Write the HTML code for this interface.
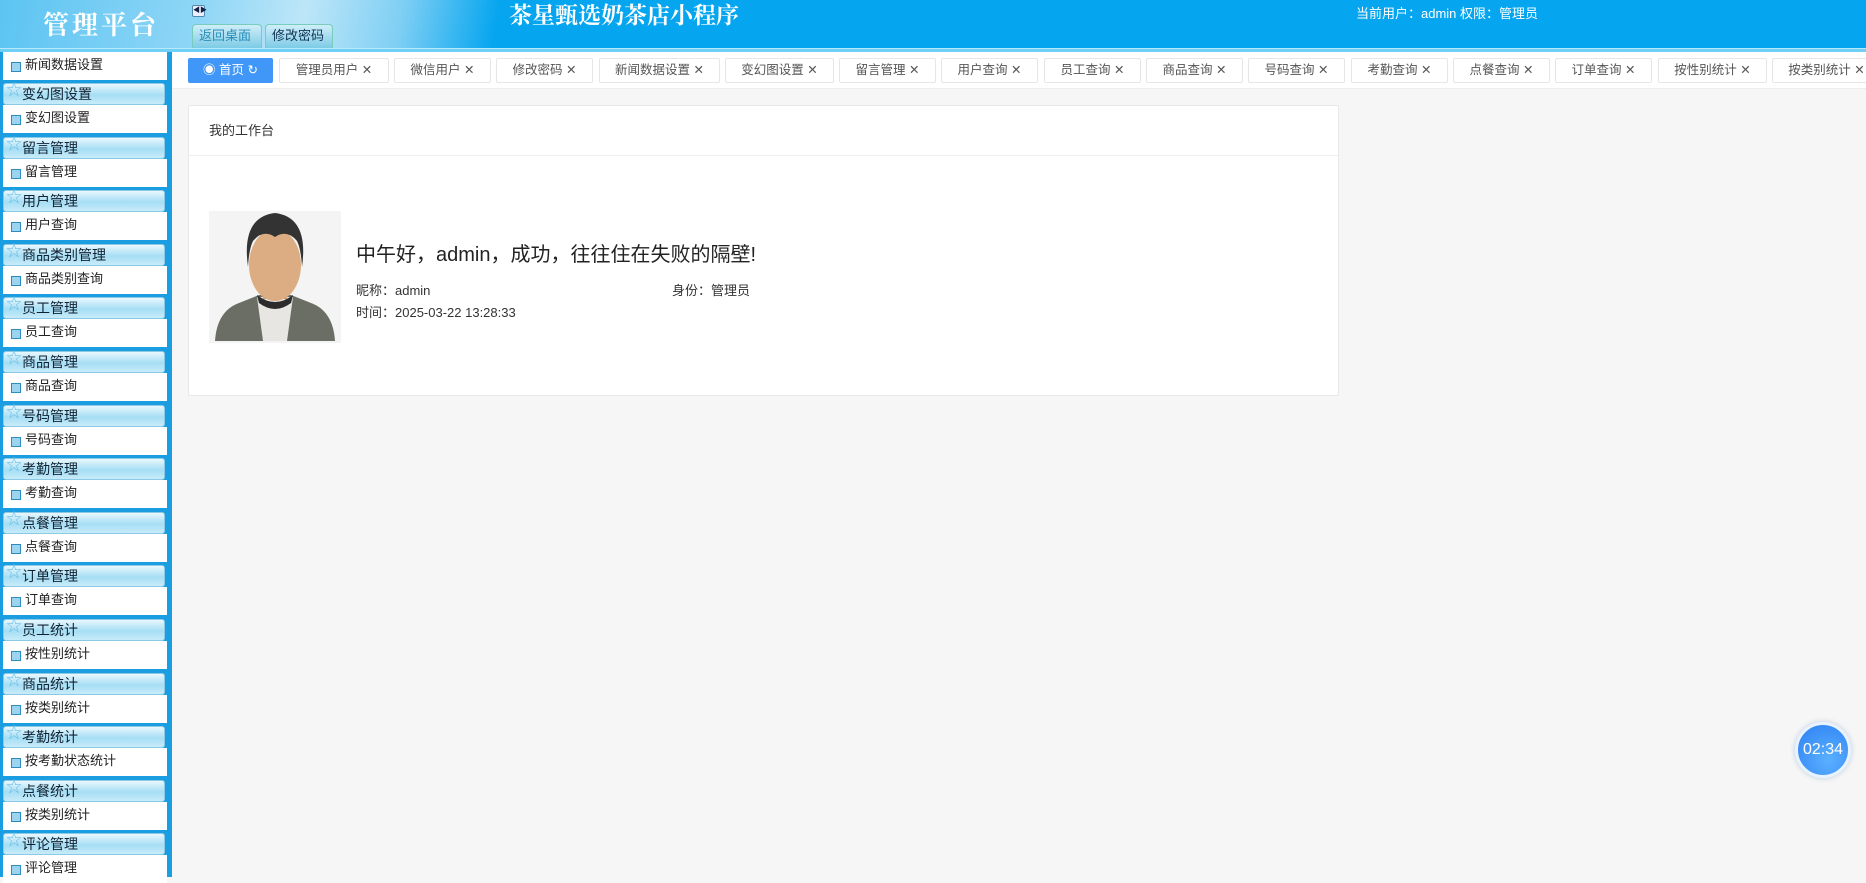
<!DOCTYPE html>
<html><head><meta charset="utf-8"><style>
*{margin:0;padding:0;box-sizing:border-box}
body{width:1866px;height:877px;overflow:hidden;background:#f6f6f6;font-family:"Liberation Sans","Noto Sans CJK SC",sans-serif;position:relative}
.hdr{position:absolute;left:0;top:0;width:1866px;height:48px;background:#05a5ef}
.hdrl{position:absolute;left:0;top:0;width:800px;height:48px;background:linear-gradient(100deg,#5cc4f2 0%,#8fd6f6 25%,#bde6f8 38%,#7fcff4 50%,#05a5ef 62%)}
.logo{position:absolute;left:43px;top:5px;font:bold 26px "Liberation Serif","Noto Serif CJK SC",serif;color:#fff;letter-spacing:3px}
.title{position:absolute;left:509px;top:-3px;font:bold 23px "Liberation Serif","Noto Serif CJK SC",serif;color:#fff}
.user{position:absolute;left:1356px;top:3px;font-size:13px;color:#fff}
.tgl{position:absolute;left:192px;top:5px;width:13px;height:12px;background:#eef;border:1px solid #58a;border-radius:2px;font-size:7px;line-height:10px;text-align:center;color:#124}
.htab{position:absolute;top:24px;height:24px;border:1px solid #7cb;border-bottom:none;border-radius:4px 4px 0 0;font-size:13px;line-height:22px;padding:0 6px;color:#135;background:linear-gradient(#cfeef8,#7dcbe6)}
.line{position:absolute;left:0;top:48px;width:1866px;height:4px;background:#6fd0f6;border-top:1px solid #b9e9fb}
.side{position:absolute;left:0;top:52px;width:172px;height:825px;background:#1b9de2}
.it{position:absolute;left:3px;width:164px;height:28px;background:#fff;font-size:13px;line-height:26px;color:#222;padding-left:22px}
.it:before{content:"";position:absolute;left:8px;top:10px;width:8px;height:8px;background:#9cd3ee;border:1px solid #2a8cc0}
.gh{position:absolute;left:3px;width:162px;height:22px;border:1px solid #8cc9e4;border-radius:3px;background:linear-gradient(#e8f7fd,#a6def4 55%,#c7ebf9);font-size:14px;line-height:20px;color:#123;padding-left:18px}
.gh:before{content:"☆";position:absolute;left:2px;top:-3px;color:#6bbfe6;font-size:16px}
.tabs{position:absolute;left:172px;top:52px;width:1694px;height:37px;background:#fff;border-bottom:1px solid #eee}
.t{position:absolute;top:6px;height:25px;border:1px solid #e6e6e6;border-radius:2px;font-size:12.5px;line-height:23px;color:#555;text-align:center;background:#fff}
.t.a{background:#4197f8;border-color:#4197f8;color:#fff}
.card{position:absolute;left:188px;top:105px;width:1151px;height:291px;background:#fff;border:1px solid #e8e8e8;border-radius:2px}
.ch{height:50px;border-bottom:1px solid #eee;font-size:13px;line-height:50px;padding-left:20px;color:#333}
.greet{position:absolute;left:167px;top:132px;font-size:20px;color:#222}
.inf{position:absolute;font-size:13px;color:#333}
.timer{position:absolute;left:1795px;top:722px;width:56px;height:56px;border-radius:50%;background:radial-gradient(circle at 60% 70%,#5ab0ff,#2d7ff2);border:3px solid #e8f3ff;box-shadow:0 0 6px #bcd;color:#fff;font-size:16px;text-align:center;line-height:50px}
</style></head><body>
<div class="hdr"></div><div class="hdrl"></div>
<div class="logo">管理平台</div>
<div class="tgl">◀▶</div>
<div class="htab" style="left:192px;width:70px;color:#2a8db8">返回桌面</div>
<div class="htab" style="left:265px;width:68px">修改密码</div>
<div class="title">茶星甄选奶茶店小程序</div>
<div class="user">当前用户：admin 权限：管理员</div>
<div class="line"></div>
<div class="side"></div>
<div class="it" style="top:52px">新闻数据设置</div>
<div class="gh" style="top:83px">变幻图设置</div><div class="it" style="top:105px">变幻图设置</div>
<div class="gh" style="top:137px">留言管理</div><div class="it" style="top:159px">留言管理</div>
<div class="gh" style="top:190px">用户管理</div><div class="it" style="top:212px">用户查询</div>
<div class="gh" style="top:244px">商品类别管理</div><div class="it" style="top:266px">商品类别查询</div>
<div class="gh" style="top:297px">员工管理</div><div class="it" style="top:319px">员工查询</div>
<div class="gh" style="top:351px">商品管理</div><div class="it" style="top:373px">商品查询</div>
<div class="gh" style="top:405px">号码管理</div><div class="it" style="top:427px">号码查询</div>
<div class="gh" style="top:458px">考勤管理</div><div class="it" style="top:480px">考勤查询</div>
<div class="gh" style="top:512px">点餐管理</div><div class="it" style="top:534px">点餐查询</div>
<div class="gh" style="top:565px">订单管理</div><div class="it" style="top:587px">订单查询</div>
<div class="gh" style="top:619px">员工统计</div><div class="it" style="top:641px">按性别统计</div>
<div class="gh" style="top:673px">商品统计</div><div class="it" style="top:695px">按类别统计</div>
<div class="gh" style="top:726px">考勤统计</div><div class="it" style="top:748px">按考勤状态统计</div>
<div class="gh" style="top:780px">点餐统计</div><div class="it" style="top:802px">按类别统计</div>
<div class="gh" style="top:833px">评论管理</div><div class="it" style="top:855px">评论管理</div>
<div class="tabs">
<div class="t a" style="left:16px;width:85px">◉ 首页 ↻</div>
<div class="t" style="left:107px;width:110px">管理员用户 ✕</div>
<div class="t" style="left:222px;width:97px">微信用户 ✕</div>
<div class="t" style="left:324px;width:97px">修改密码 ✕</div>
<div class="t" style="left:427px;width:121px">新闻数据设置 ✕</div>
<div class="t" style="left:553px;width:109px">变幻图设置 ✕</div>
<div class="t" style="left:667px;width:97px">留言管理 ✕</div>
<div class="t" style="left:769px;width:97px">用户查询 ✕</div>
<div class="t" style="left:872px;width:97px">员工查询 ✕</div>
<div class="t" style="left:974px;width:97px">商品查询 ✕</div>
<div class="t" style="left:1076px;width:97px">号码查询 ✕</div>
<div class="t" style="left:1179px;width:97px">考勤查询 ✕</div>
<div class="t" style="left:1281px;width:97px">点餐查询 ✕</div>
<div class="t" style="left:1383px;width:97px">订单查询 ✕</div>
<div class="t" style="left:1486px;width:109px">按性别统计 ✕</div>
<div class="t" style="left:1600px;width:109px">按类别统计 ✕</div>
</div>
<div class="card">
<div class="ch">我的工作台</div>
<svg style="position:absolute;left:20px;top:105px" width="132" height="132" viewBox="0 0 132 132">
<rect width="132" height="132" fill="#f4f4f4"/>
<path d="M6 130 Q8 100 30 92 L50 84 L82 84 L102 92 Q124 100 126 130 Z" fill="#6b6e64"/>
<path d="M48 86 L84 86 L78 130 L54 130 Z" fill="#e8e6e2"/>
<path d="M48 84 Q66 98 84 84 L82 92 Q66 104 50 92 Z" fill="#2c2c2c"/>
<rect x="54" y="66" width="24" height="22" fill="#c99a72"/>
<ellipse cx="66" cy="54" rx="26" ry="36" fill="#dcad82"/>
<path d="M39 56 Q32 6 66 2 Q100 6 93 56 Q92 38 88 30 Q78 18 66 26 Q54 18 44 30 Q40 38 39 56 Z" fill="#333"/>
</svg>
<div class="greet">中午好，admin，成功，往往住在失败的隔壁!</div>
<div class="inf" style="left:167px;top:174px">昵称：admin</div>
<div class="inf" style="left:483px;top:174px">身份：管理员</div>
<div class="inf" style="left:167px;top:196px">时间：2025-03-22 13:28:33</div>
</div>
<div class="timer">02:34</div>
</body></html>
